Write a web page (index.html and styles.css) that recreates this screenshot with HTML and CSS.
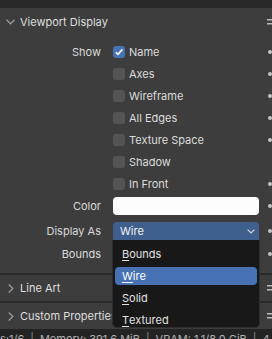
FILE: index.html
```html
<!DOCTYPE html>
<html lang="en">
<head>
  <meta charset="UTF-8">
  <title>Viewport Display</title>
  <link rel="stylesheet" href="styles.css">
</head>
<body>
  <div class="page">
    <div class="topbar"></div>

    <section class="panel">
      <div class="panel-head">
        <svg class="chev" width="9" height="6" viewBox="0 0 9 6"><path d="M0.5 0.8 L4.5 4.8 L8.5 0.8" fill="none" stroke="#9a9a9a" stroke-width="1.3"/></svg>
        <span class="title">Viewport Display</span>
        <svg class="grip" width="6" height="6" viewBox="0 0 6 6"><rect x="0" y="0" width="6" height="1.5" fill="#bdbdbd"/><rect x="0" y="4" width="6" height="1.5" fill="#bdbdbd"/></svg>
      </div>
      <div class="panel-body">
        <div class="row">
          <span class="label">Show</span>
          <div class="ctrl check"><span class="box on"><svg width="10" height="10" viewBox="0 0 10 10"><path d="M1.8 5.2 L4 7.4 L8.4 2.4" fill="none" stroke="#fff" stroke-width="1.6"/></svg></span>Name</div>
          <span class="deco"><i class="dot"></i></span>
        </div>
        <div class="row">
          <span class="label"></span>
          <div class="ctrl check"><span class="box"></span>Axes</div>
          <span class="deco"><i class="dot"></i></span>
        </div>
        <div class="row">
          <span class="label"></span>
          <div class="ctrl check"><span class="box"></span>Wireframe</div>
          <span class="deco"><i class="dot"></i></span>
        </div>
        <div class="row">
          <span class="label"></span>
          <div class="ctrl check"><span class="box"></span>All Edges</div>
          <span class="deco"><i class="dot"></i></span>
        </div>
        <div class="row">
          <span class="label"></span>
          <div class="ctrl check"><span class="box"></span>Texture Space</div>
          <span class="deco"><i class="dot"></i></span>
        </div>
        <div class="row">
          <span class="label"></span>
          <div class="ctrl check"><span class="box"></span>Shadow</div>
          <span class="deco"></span>
        </div>
        <div class="row">
          <span class="label"></span>
          <div class="ctrl check"><span class="box"></span>In Front</div>
          <span class="deco"><i class="dot"></i></span>
        </div>
        <div class="row">
          <span class="label">Color</span>
          <div class="ctrl"><span class="swatch"></span></div>
          <span class="deco"><i class="dot"></i></span>
        </div>
        <div class="row group">
          <span class="label">Display As</span>
          <div class="ctrl"><span class="dropdown">Wire<svg width="8" height="5" viewBox="0 0 8 5"><path d="M0.6 0.6 L4 4 L7.4 0.6" fill="none" stroke="#d8d8d8" stroke-width="1.2"/></svg></span></div>
          <span class="deco"><i class="dot"></i></span>
        </div>
        <div class="row bounds">
          <span class="label">Bounds</span>
          <div class="ctrl"></div>
          <span class="deco"><i class="dot"></i></span>
        </div>
      </div>
    </section>

    <section class="panel closed">
      <div class="panel-head">
        <svg class="chev side" width="6" height="9" viewBox="0 0 6 9"><path d="M0.8 0.5 L4.8 4.5 L0.8 8.5" fill="none" stroke="#9a9a9a" stroke-width="1.3"/></svg>
        <span class="title">Line Art</span>
        <svg class="grip" width="6" height="6" viewBox="0 0 6 6"><rect x="0" y="0" width="6" height="1.5" fill="#bdbdbd"/><rect x="0" y="4" width="6" height="1.5" fill="#bdbdbd"/></svg>
      </div>
    </section>

    <section class="panel closed">
      <div class="panel-head">
        <svg class="chev side" width="6" height="9" viewBox="0 0 6 9"><path d="M0.8 0.5 L4.8 4.5 L0.8 8.5" fill="none" stroke="#9a9a9a" stroke-width="1.3"/></svg>
        <span class="title">Custom Properties</span>
        <svg class="grip" width="6" height="6" viewBox="0 0 6 6"><rect x="0" y="0" width="6" height="1.5" fill="#bdbdbd"/><rect x="0" y="4" width="6" height="1.5" fill="#bdbdbd"/></svg>
      </div>
    </section>

    <footer class="status">
      <span class="stat first">Objects:1/6</span>
      <span class="sep">|</span>
      <span class="stat">Memory: 391.6 MiB</span>
      <span class="sep">|</span>
      <span class="stat">VRAM: 1.1/8.0 GiB</span>
      <span class="sep">|</span>
      <span class="stat">4.1.0</span>
    </footer>

    <!-- open enum menu for Display As -->
    <div class="menu">
      <div class="item"><u>B</u>ounds</div>
      <div class="item active"><u>W</u>ire</div>
      <div class="item"><u>S</u>olid</div>
      <div class="item"><u>T</u>extured</div>
    </div>
  </div>
</body>
</html>
```

FILE: styles.css
```css
body {
  margin: 0;
  padding: 0;
  background-color: #2a2a2a;
  font-family: Inter, "Noto Sans", sans-serif;
  font-size: 11px;
  color: #dcdcdc;
  overflow: hidden;
}

.page {
  position: relative;
  width: 284px;
  height: 339px;
  overflow: hidden;
}

.topbar {
  height: 8px;
  background-color: #282828;
}

.panel {
  background-color: #3d3d3d;
}

.panel.closed {
  margin-top: 2px;
}

.panel-head {
  display: flex;
  align-items: center;
  height: 27px;
}

.panel.closed .panel-head {
  height: 26px;
}

.chev {
  margin-left: 6px;
  width: 9px;
  margin-right: 5px;
}

.chev.side {
  margin-left: 8px;
  width: 6px;
  margin-right: 6px;
}

.title {
  flex: 1;
  color: #dedede;
}

.grip {
  margin-right: 11px;
}

.panel-body {
  padding: 6px 0 8px;
}

.row {
  display: flex;
  align-items: center;
  height: 22px;
}

.row.group {
  margin-top: 3px;
}

.row.bounds {
  margin-top: 1px;
}

.label {
  width: 101px;
  text-align: right;
  color: #dadada;
}

.ctrl {
  width: 146px;
  margin-left: 12px;
  display: flex;
  align-items: center;
}

.check {
  gap: 4px;
}

.box {
  width: 12px;
  height: 12px;
  border-radius: 3px;
  background-color: #545454;
  display: flex;
  align-items: center;
  justify-content: center;
}

.box.on {
  background-color: #4772b3;
}

.swatch {
  width: 146px;
  height: 18px;
  border-radius: 4px;
  background-color: #fdfdfd;
}

.dropdown {
  width: 146px;
  height: 18px;
  box-sizing: border-box;
  padding: 0 4px 0 7px;
  border-radius: 4px 4px 0 0;
  background-color: #3f5f8e;
  color: #f2f2f2;
  display: flex;
  align-items: center;
  justify-content: space-between;
}

.deco {
  width: 22px;
  display: flex;
  justify-content: center;
}

.dot {
  width: 4px;
  height: 4px;
  border-radius: 50%;
  background-color: #c4c4c4;
}

.status {
  height: 20px;
  box-sizing: border-box;
  padding-top: 3px;
  background-color: #232323;
  color: #b0b0b0;
  display: flex;
  align-items: flex-start;
  white-space: nowrap;
}

.status .stat.first {
  margin-left: -34px;
}

.sep {
  margin: 0 6px;
  color: #8a8a8a;
}

.menu {
  position: absolute;
  left: 112px;
  top: 240px;
  width: 148px;
  height: 88px;
  box-sizing: border-box;
  padding: 1px 2px 0;
  background-color: #181818;
  border: 1px solid #2e2e2e;
  border-top: none;
  border-radius: 0 0 5px 5px;
  overflow: hidden;
}

.item {
  height: 18px;
  margin-top: 4px;
  padding-left: 7px;
  display: flex;
  align-items: center;
  color: #e2e2e2;
  border-radius: 4px;
}

.item.active {
  background-color: #4772b3;
  color: #fff;
}

.item u {
  text-underline-offset: 2px;
}
```
